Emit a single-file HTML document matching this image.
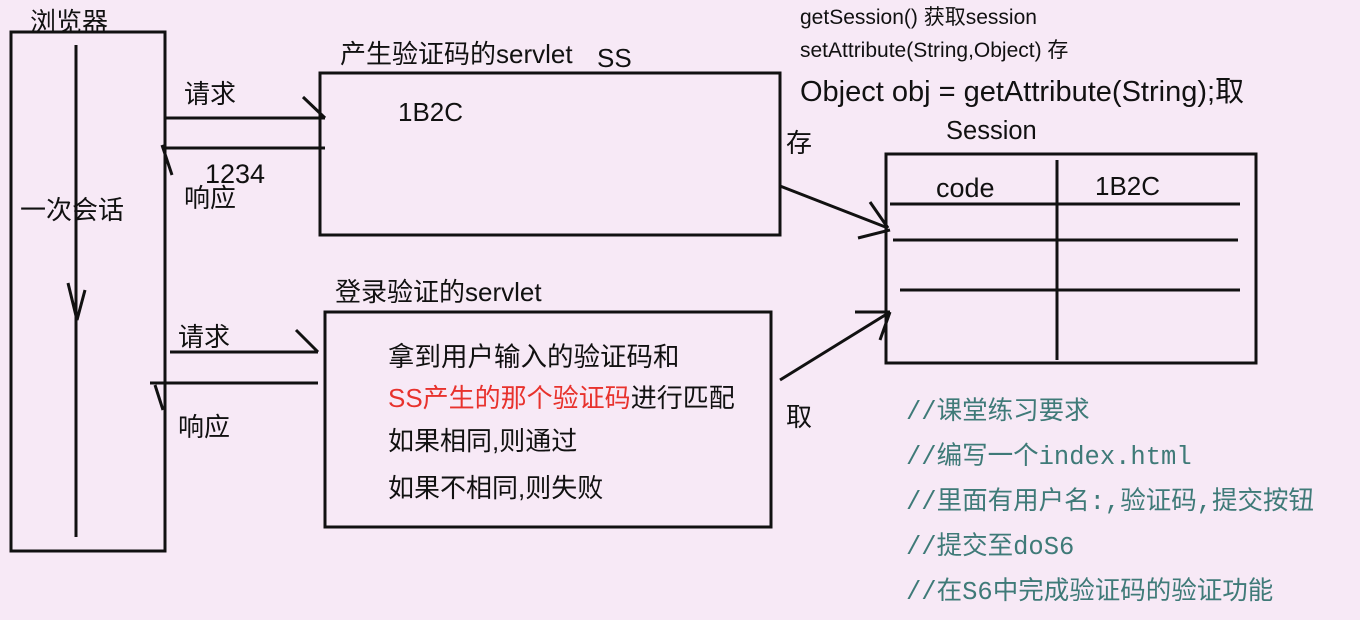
<!DOCTYPE html>
<html><head><meta charset="utf-8"><style>
html,body{margin:0;padding:0;background:#f7e9f6;width:1360px;height:620px;overflow:hidden}
svg{display:block}
text{font-family:"Liberation Sans","Noto Sans CJK SC",sans-serif;fill:#111}
.c{font-family:"Liberation Mono","Noto Sans CJK SC",monospace;fill:#3f7a78;font-size:25.5px}
</style></head><body>
<svg width="1360" height="620" viewBox="0 0 1360 620" xmlns="http://www.w3.org/2000/svg">
<rect width="1360" height="620" fill="#f7e9f6"/>
<g stroke="#111" stroke-width="3" fill="none">
<rect x="11" y="32" width="154" height="519"/>
<line x1="76" y1="45" x2="76" y2="537"/>
<polyline points="68,283 77,320 85,290"/>
<rect x="320" y="73" width="460" height="162"/>
<line x1="165" y1="118" x2="325" y2="118"/>
<line x1="303" y1="97" x2="325" y2="118"/>
<line x1="165" y1="148" x2="325" y2="148"/>
<line x1="162" y1="145" x2="172" y2="175"/>
<line x1="780" y1="186" x2="888" y2="228"/>
<line x1="870" y1="202" x2="888" y2="228"/>
<line x1="858" y1="238" x2="890" y2="230"/>
<rect x="886" y="154" width="370" height="209"/>
<line x1="1057" y1="160" x2="1057" y2="360"/>
<line x1="890" y1="204" x2="1240" y2="204"/>
<line x1="893" y1="240" x2="1238" y2="240"/>
<line x1="900" y1="290" x2="1240" y2="290"/>
<rect x="325" y="312" width="446" height="215"/>
<line x1="170" y1="352" x2="318" y2="352"/>
<line x1="296" y1="330" x2="318" y2="352"/>
<line x1="150" y1="383" x2="318" y2="383"/>
<line x1="155" y1="385" x2="163" y2="410"/>
<line x1="780" y1="380" x2="890" y2="312"/>
<line x1="855" y1="312" x2="890" y2="312"/>
<line x1="880" y1="340" x2="890" y2="312"/>
</g>
<text x="30" y="31" font-size="26">浏览器</text>
<text x="20" y="219" font-size="26">一次会话</text>
<text x="340" y="63" font-size="26">产生验证码的servlet</text>
<text x="597" y="67" font-size="26">SS</text>
<text x="398" y="121" font-size="26">1B2C</text>
<text x="184" y="103" font-size="26">请求</text>
<text x="205" y="183" font-size="27">1234</text>
<text x="184" y="207" font-size="26">响应</text>
<text x="786" y="152" font-size="26">存</text>
<text x="800" y="24" font-size="21">getSession() 获取session</text>
<text x="800" y="57" font-size="21">setAttribute(String,Object) 存</text>
<text x="800" y="101" font-size="29">Object obj = getAttribute(String);取</text>
<text x="946" y="139" font-size="25.5">Session</text>
<text x="936" y="197" font-size="27">code</text>
<text x="1095" y="195" font-size="26">1B2C</text>
<text x="335" y="301" font-size="26">登录验证的servlet</text>
<text x="178" y="346" font-size="26">请求</text>
<text x="178" y="436" font-size="26">响应</text>
<text x="786" y="426" font-size="26">取</text>
<text x="388" y="366" font-size="26.5">拿到用户输入的验证码和</text>
<text x="388" y="407" font-size="26"><tspan fill="#e8322d">SS产生的那个验证码</tspan>进行匹配</text>
<text x="388" y="450" font-size="26">如果相同,则通过</text>
<text x="388" y="497" font-size="26">如果不相同,则失败</text>
<text class="c" x="906" y="419">//课堂练习要求</text>
<text class="c" x="906" y="464">//编写一个index.html</text>
<text class="c" x="906" y="509">//里面有用户名:,验证码,提交按钮</text>
<text class="c" x="906" y="554">//提交至doS6</text>
<text class="c" x="906" y="599">//在S6中完成验证码的验证功能</text>
</svg>
</body></html>
